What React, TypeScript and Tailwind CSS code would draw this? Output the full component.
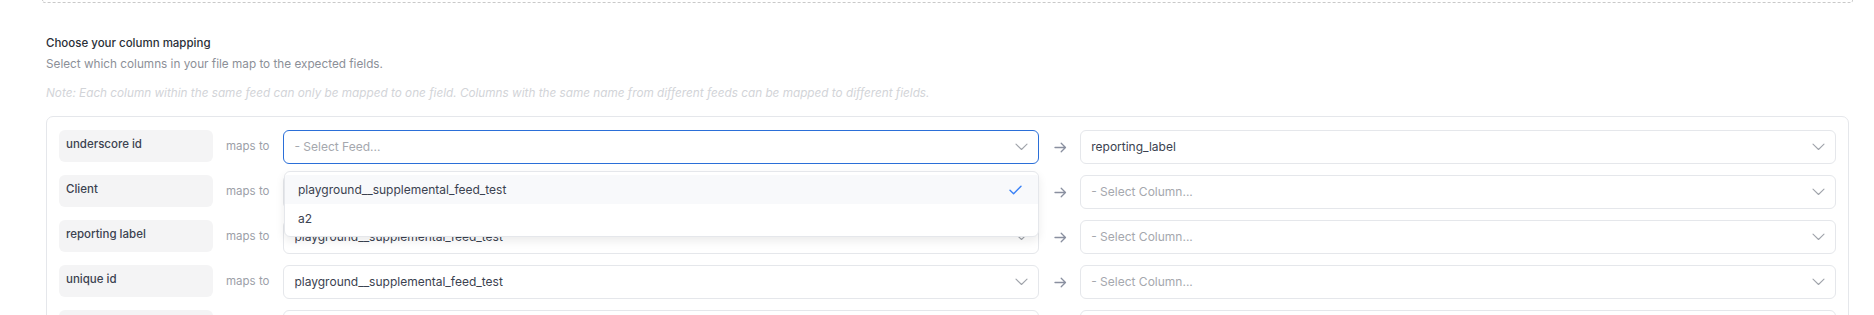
import React from "react";

const font = { fontFamily: "Inter, 'Noto Sans', sans-serif" };

function Chevron() {
  return (
    <svg width="13" height="8" viewBox="0 0 13 8" fill="none" className="shrink-0">
      <path d="M1 1.2 L6.5 6.5 L12 1.2" stroke="#a0a4ab" strokeWidth="1.1" strokeLinecap="round" strokeLinejoin="round" />
    </svg>
  );
}

function Arrow() {
  return (
    <svg width="13" height="11" viewBox="0 0 13 11" fill="none" className="shrink-0">
      <path d="M1 5.5 H11.5 M7.2 1.2 L11.5 5.5 L7.2 9.8" stroke="#8a90a0" strokeWidth="1.3" strokeLinecap="round" strokeLinejoin="round" />
    </svg>
  );
}

function Select({ value, placeholder, focused }: { value?: string; placeholder?: string; focused?: boolean }) {
  return (
    <div
      className={
        "flex-1 h-[34px] rounded-[6px] bg-white flex items-center justify-between pl-[10px] pr-[10px] " +
        (focused ? "border border-[#2b6fd8]" : "border border-[#e5e7eb]")
      }
    >
      {value ? (
        <span className="text-[12px] text-[#3b4250]">{value}</span>
      ) : (
        <span className="text-[12px] text-[#a5a8ae]">{placeholder}</span>
      )}
      <Chevron />
    </div>
  );
}

type Row = { label: string; feed?: string; col?: string };

const rows: Row[] = [
  { label: "underscore id", col: "reporting_label" },
  { label: "Client", feed: "playground__supplemental_feed_test" },
  { label: "reporting label", feed: "playground__supplemental_feed_test" },
  { label: "unique id", feed: "playground__supplemental_feed_test" },
  { label: "", feed: "playground__supplemental_feed_test" },
];

export default function App() {
  return (
    <div className="w-[1874px] h-[315px] overflow-hidden bg-white" style={font}>
      <div className="ml-[42px] w-[1811px] h-[3px] border-x border-b border-dashed border-[#c9c9c9] rounded-b-[4px]" />
      <div className="pl-[46px] pt-[32px]">
        <div className="text-[11.5px] font-medium text-[#2a2f38] leading-[16px]">Choose your column mapping</div>
        <div className="mt-[5px] text-[11.75px] text-[#8c9098] leading-[16px]">
          Select which columns in your file map to the expected fields.
        </div>
        <div className="mt-[13px] text-[11.75px] italic text-[#d2d4d8] leading-[16px]">
          Note: Each column within the same feed can only be mapped to one field. Columns with the same name from different feeds can be mapped to different fields.
        </div>
      </div>
      <div className="ml-[46px] mr-[25px] mt-[15px] border border-[#e5e7eb] rounded-[7px] px-[12px] pt-[13px] pb-[12px] flex flex-col gap-[11px]">
        {rows.map((r, i) => (
          <div key={i} className="relative flex items-start">
            <div className="w-[154px] h-[32px] rounded-[6px] bg-[#f4f4f5] flex items-center px-[7px] shrink-0">
              <span className="text-[11.5px] font-medium text-[#3b4250] -mt-[2px]">{r.label}</span>
            </div>
            <div className="h-[34px] flex items-center pl-[13px] pr-[14px] shrink-0">
              <span className="text-[11.5px] text-[#9ca0a8]">maps to</span>
            </div>
            {i === 0 ? (
              <Select placeholder="- Select Feed..." focused />
            ) : (
              <Select value={r.feed} />
            )}
            <div className="h-[34px] flex items-center pl-[15px] pr-[13px] shrink-0">
              <Arrow />
            </div>
            {r.col ? <Select value={r.col} /> : <Select placeholder="- Select Column..." />}
            {i === 0 && (
              <div className="absolute left-[225px] top-[41px] w-[755px] z-10 bg-white border border-[#e5e7eb] rounded-[6px] shadow-[0_4px_10px_rgba(0,0,0,0.08)] py-[3px]">
                <div className="h-[29px] bg-[#f8f9fb] flex items-center justify-between pl-[13px] pr-[16px]">
                  <span className="text-[12px] text-[#3b4250]">playground__supplemental_feed_test</span>
                  <svg width="13" height="10" viewBox="0 0 13 10" fill="none">
                    <path d="M1 5.2 L4.6 8.8 L12 1.2" stroke="#3b82f6" strokeWidth="1.4" strokeLinecap="round" strokeLinejoin="round" />
                  </svg>
                </div>
                <div className="h-[29px] flex items-center pl-[13px]">
                  <span className="text-[12px] text-[#3b4250]">a2</span>
                </div>
              </div>
            )}
          </div>
        ))}
      </div>
    </div>
  );
}
